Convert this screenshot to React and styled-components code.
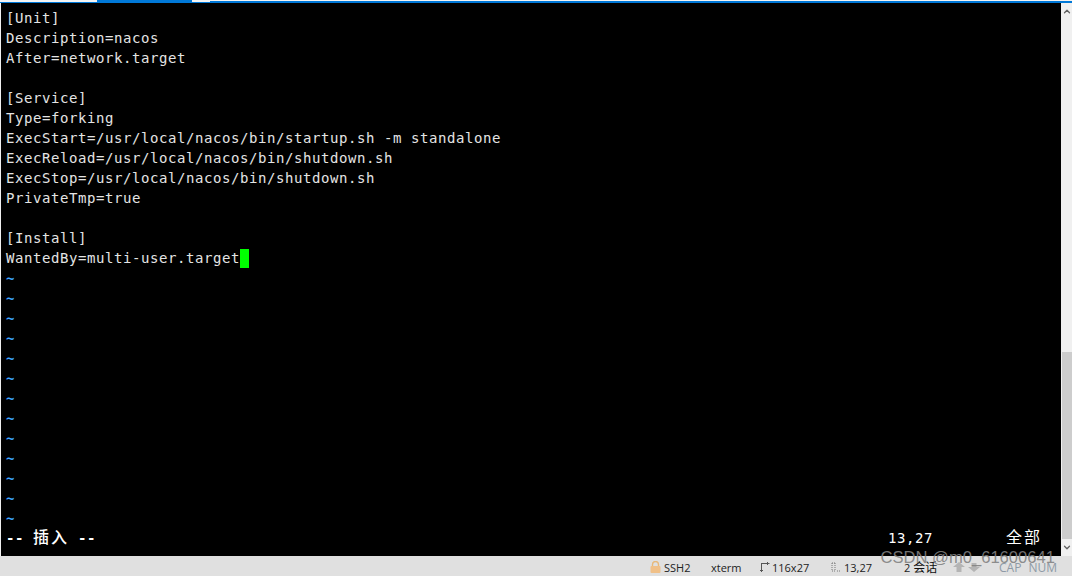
import styled, { createGlobalStyle } from 'styled-components';
import { ChevronUp, ChevronDown } from 'lucide-react';

const lines = [
  '[Unit]',
  'Description=nacos',
  'After=network.target',
  '',
  '[Service]',
  'Type=forking',
  'ExecStart=/usr/local/nacos/bin/startup.sh -m standalone',
  'ExecReload=/usr/local/nacos/bin/shutdown.sh',
  'ExecStop=/usr/local/nacos/bin/shutdown.sh',
  'PrivateTmp=true',
  '',
  '[Install]',
];

const GlobalStyle = createGlobalStyle`
  html, body {
    margin: 0;
    padding: 0;
    background: #000;
  }
  #root {
    width: 1072px;
    height: 576px;
  }
`;

function App() {
  return (
    <Window>
      <GlobalStyle />
      <TabStrip>
        <TabPiece $width={97} $top={2} />
        <TabPiece $width={95} $top={0} />
        <TabPiece $width={18} $top={2} />
        <TabPiece $width={862} $top={1} />
      </TabStrip>
      <Middle>
        <Terminal>
          {lines.map((line, i) => (
            <Line key={i}>{line}</Line>
          ))}
          <Line>
            WantedBy=multi-user.target
            <Cursor />
          </Line>
          {Array.from({ length: 13 }, (_, i) => (
            <Tilde key={i}>~</Tilde>
          ))}
          <ModeRow>
            <ModeText>
              -- <Wide $weight={500}>插入</Wide> --
            </ModeText>
            <RulerPos>13,27</RulerPos>
            <Wide>全部</Wide>
          </ModeRow>
        </Terminal>
        <ScrollBar>
          <ArrowBox>
            <ChevronUp size={13} strokeWidth={3} color="#606060" />
          </ArrowBox>
          <Gap />
          <Thumb />
          <ArrowBox>
            <ChevronDown size={13} strokeWidth={3} color="#606060" />
          </ArrowBox>
        </ScrollBar>
      </Middle>
      <StatusBar>
        <StatusItem $width={61}>
          <svg width="11" height="12" viewBox="0 0 11 12">
            <path d="M2.5 5V3.5a3 3 0 0 1 6 0V5" fill="none" stroke="#e8b878" strokeWidth="1.4" />
            <rect x="0.5" y="5" width="10" height="7" rx="1" fill="#f0c088" />
          </svg>
          SSH2
        </StatusItem>
        <StatusItem $width={48}>xterm</StatusItem>
        <StatusItem $width={72} $gap={2}>
          <svg width="11" height="12" viewBox="0 0 11 12">
            <path d="M2.500 2v9M1 9.500h3M2.500 2.500h8M8.500 1v3" fill="none" stroke="#555" strokeWidth="1" />
          </svg>
          116x27
        </StatusItem>
        <StatusItem $width={73} $gap={3}>
          <svg width="10" height="12" viewBox="0 0 10 12">
            <path d="M1 2v8M4 2v8M1 2h3M1 10h3M6 10h1M8 10h1" fill="none" stroke="#777" strokeWidth="1" strokeDasharray="1 1" />
          </svg>
          13,27
        </StatusItem>
        <StatusItem $width={49}>
          2 <Chinese>会话</Chinese>
        </StatusItem>
        <StatusArrows>
          <svg width="27" height="10" viewBox="0 0 27 10">
            <path d="M6 0l6 5H8.500v5h-5V5H0zM21 10l6-5h-3.500V1h-5v4H15z" fill="#b4b4b4" />
          </svg>
        </StatusArrows>
        <DimLabel>CAP</DimLabel>
        <DimLabel>NUM</DimLabel>
      </StatusBar>
      <Watermark>CSDN @m0_61600641</Watermark>
    </Window>
  );
}

export default App;

const Window = styled.div`
  position: relative;
  display: flex;
  flex-direction: column;
  width: 1072px;
  height: 576px;
  overflow: hidden;
  background: #000;
`;

// top edge of the tab bar
const TabStrip = styled.div`
  display: flex;
  height: 3px;
  flex: none;
`;
const TabPiece = styled.div`
  box-sizing: border-box;
  width: ${props => props.$width}px;
  border-top: ${props => props.$top}px solid #f4f4f4;
  background: #0078d7;
`;

const Middle = styled.div`
  display: flex;
  flex: 1;
  min-height: 0;
`;

const Terminal = styled.div`
  flex: 1;
  padding: 5px 0 0 6px;
  border-left: 1px solid #f0f0f0;
  font-family: 'DejaVu Sans Mono', 'Noto Sans CJK SC', monospace;
  font-size: 14px;
  letter-spacing: 0.57px;
  color: #e4e4e4;
`;
const Line = styled.div`
  height: 20px;
  line-height: 20px;
  margin-left: -1px;
  white-space: pre;
`;
const Cursor = styled.span`
  display: inline-block;
  width: 9px;
  height: 19px;
  margin-bottom: -5px;
  background: #00ff00;
`;
const Tilde = styled(Line)`
  color: #3ea6ff;
  font-weight: 700;
`;
const ModeRow = styled.div`
  display: flex;
  height: 20px;
  margin-left: -1px;
  line-height: 20px;
  color: #fff;
  white-space: pre;
`;
const ModeText = styled.span`
  width: 882px;
  font-weight: 700;
`;
const Wide = styled.span`
  font-size: 16px;
  font-weight: ${props => props.$weight || 400};
  letter-spacing: 2px;
`;
const RulerPos = styled.span`
  width: 118px;
`;

const ScrollBar = styled.div`
  display: flex;
  flex-direction: column;
  width: 11px;
  padding-left: 1px;
  box-sizing: border-box;
  background: #f0f0f0;
`;
const ArrowBox = styled.div`
  display: flex;
  align-items: center;
  justify-content: center;
  flex: none;
  height: 17px;
`;
const Gap = styled.div`
  flex: 1;
`;
const Thumb = styled.div`
  height: 187px;
  background: #cdcdcd;
`;

const StatusBar = styled.div`
  display: flex;
  align-items: center;
  flex: none;
  height: 20px;
  padding: 2px 0 0 650px;
  box-sizing: border-box;
  background: #e0e0e0;
  font-family: 'Open Sans', 'Noto Sans CJK SC', sans-serif;
  font-size: 11px;
  color: #222;
`;
const StatusItem = styled.div`
  display: flex;
  align-items: center;
  gap: ${props => props.$gap || 3}px;
  width: ${props => props.$width}px;
`;
const Chinese = styled.span`
  font-size: 12px;
  color: #111;
`;
const StatusArrows = styled.div`
  display: flex;
  width: 46px;
`;
const DimLabel = styled.div`
  margin-right: 7px;
  color: #8e9aa6;
  font-size: 12px;
`;

const Watermark = styled.div`
  position: absolute;
  right: 17px;
  bottom: 8px;
  font-family: 'Liberation Sans', sans-serif;
  font-size: 16.6px;
  color: rgba(128, 128, 128, 0.9);
`;
